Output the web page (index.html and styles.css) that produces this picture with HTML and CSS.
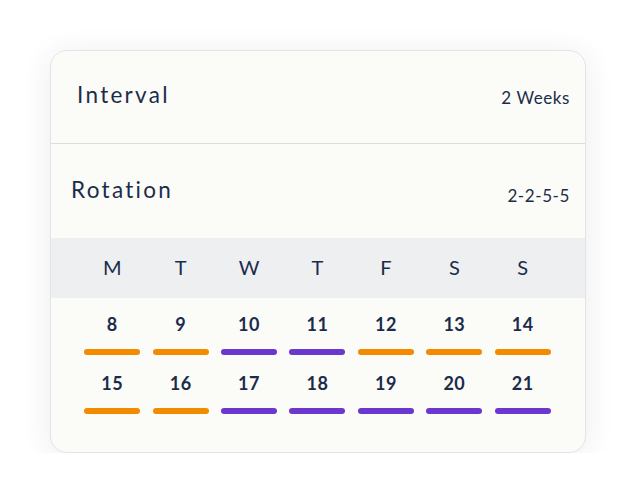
FILE: index.html
```html
<!DOCTYPE html>
<html>
<head>
<meta charset="utf-8">
<link rel="stylesheet" href="styles.css">
</head>
<body>
<div class="card">
  <div class="row row-interval">
    <span class="label label-interval">Interval</span>
    <span class="value value-interval">2 Weeks</span>
  </div>
  <div class="row row-rotation">
    <span class="label label-rotation">Rotation</span>
    <span class="value value-rotation">2-2-5-5</span>
  </div>
  <div class="days">
    <span>M</span><span>T</span><span>W</span><span>T</span><span>F</span><span>S</span><span>S</span>
  </div>
  <div class="dates">
    <div class="cell"><span class="num">8</span><span class="bar orange"></span></div>
    <div class="cell"><span class="num">9</span><span class="bar orange"></span></div>
    <div class="cell"><span class="num">10</span><span class="bar purple"></span></div>
    <div class="cell"><span class="num">11</span><span class="bar purple"></span></div>
    <div class="cell"><span class="num">12</span><span class="bar orange"></span></div>
    <div class="cell"><span class="num">13</span><span class="bar orange"></span></div>
    <div class="cell"><span class="num">14</span><span class="bar orange"></span></div>
    <div class="cell"><span class="num">15</span><span class="bar orange"></span></div>
    <div class="cell"><span class="num">16</span><span class="bar orange"></span></div>
    <div class="cell"><span class="num">17</span><span class="bar purple"></span></div>
    <div class="cell"><span class="num">18</span><span class="bar purple"></span></div>
    <div class="cell"><span class="num">19</span><span class="bar purple"></span></div>
    <div class="cell"><span class="num">20</span><span class="bar purple"></span></div>
    <div class="cell"><span class="num">21</span><span class="bar purple"></span></div>
  </div>
</div>
</body>
</html>
```

FILE: styles.css
```css
html, body {
  margin: 0;
  padding: 0;
  background: #ffffff;
}
body {
  padding: 50px 0 0 50px;
  font-family: Lato, "Open Sans", sans-serif;
  color: #1b2c4b;
}
.card {
  box-sizing: border-box;
  width: 536px;
  height: 403px;
  background: #fbfbf7;
  border: 1px solid #e3e4e8;
  border-radius: 17px;
  box-shadow: 0 4px 30px rgba(30, 40, 80, 0.09);
  overflow: hidden;
}
.row {
  display: flex;
  justify-content: space-between;
  align-items: flex-start;
  padding-right: 15px;
}
.row-interval {
  height: 92px;
  border-bottom: 1px solid #dcdde1;
  padding-left: 26px;
}
.row-rotation {
  height: 94px;
  padding-left: 20px;
}
.label {
  font-size: 22.5px;
  line-height: 22px;
  letter-spacing: 2.3px;
}
.value {
  font-size: 17px;
  line-height: 16px;
  letter-spacing: 0.6px;
}
.label-interval { margin-top: 33px; }
.value-interval { margin-top: 39px; }
.label-rotation { margin-top: 35px; }
.value-rotation { margin-top: 44px; }
.days {
  height: 60px;
  background: #eeeff0;
  display: grid;
  grid-template-columns: repeat(7, 1fr);
  align-items: center;
  padding: 0 28px 0 27px;
  font-size: 20px;
}
.days span {
  text-align: center;
  margin-top: -3px;
}
.dates {
  display: grid;
  grid-template-columns: repeat(7, 1fr);
  row-gap: 19px;
  padding: 17px 28px 0 27px;
}
.cell {
  display: flex;
  flex-direction: column;
  align-items: center;
  gap: 16px;
}
.num {
  font-size: 18px;
  line-height: 18px;
  font-weight: 700;
  letter-spacing: 0.5px;
}
.bar {
  width: 56px;
  height: 6px;
  border-radius: 3px;
}
.orange { background: #f28b00; }
.purple { background: #6b37cf; }
```
